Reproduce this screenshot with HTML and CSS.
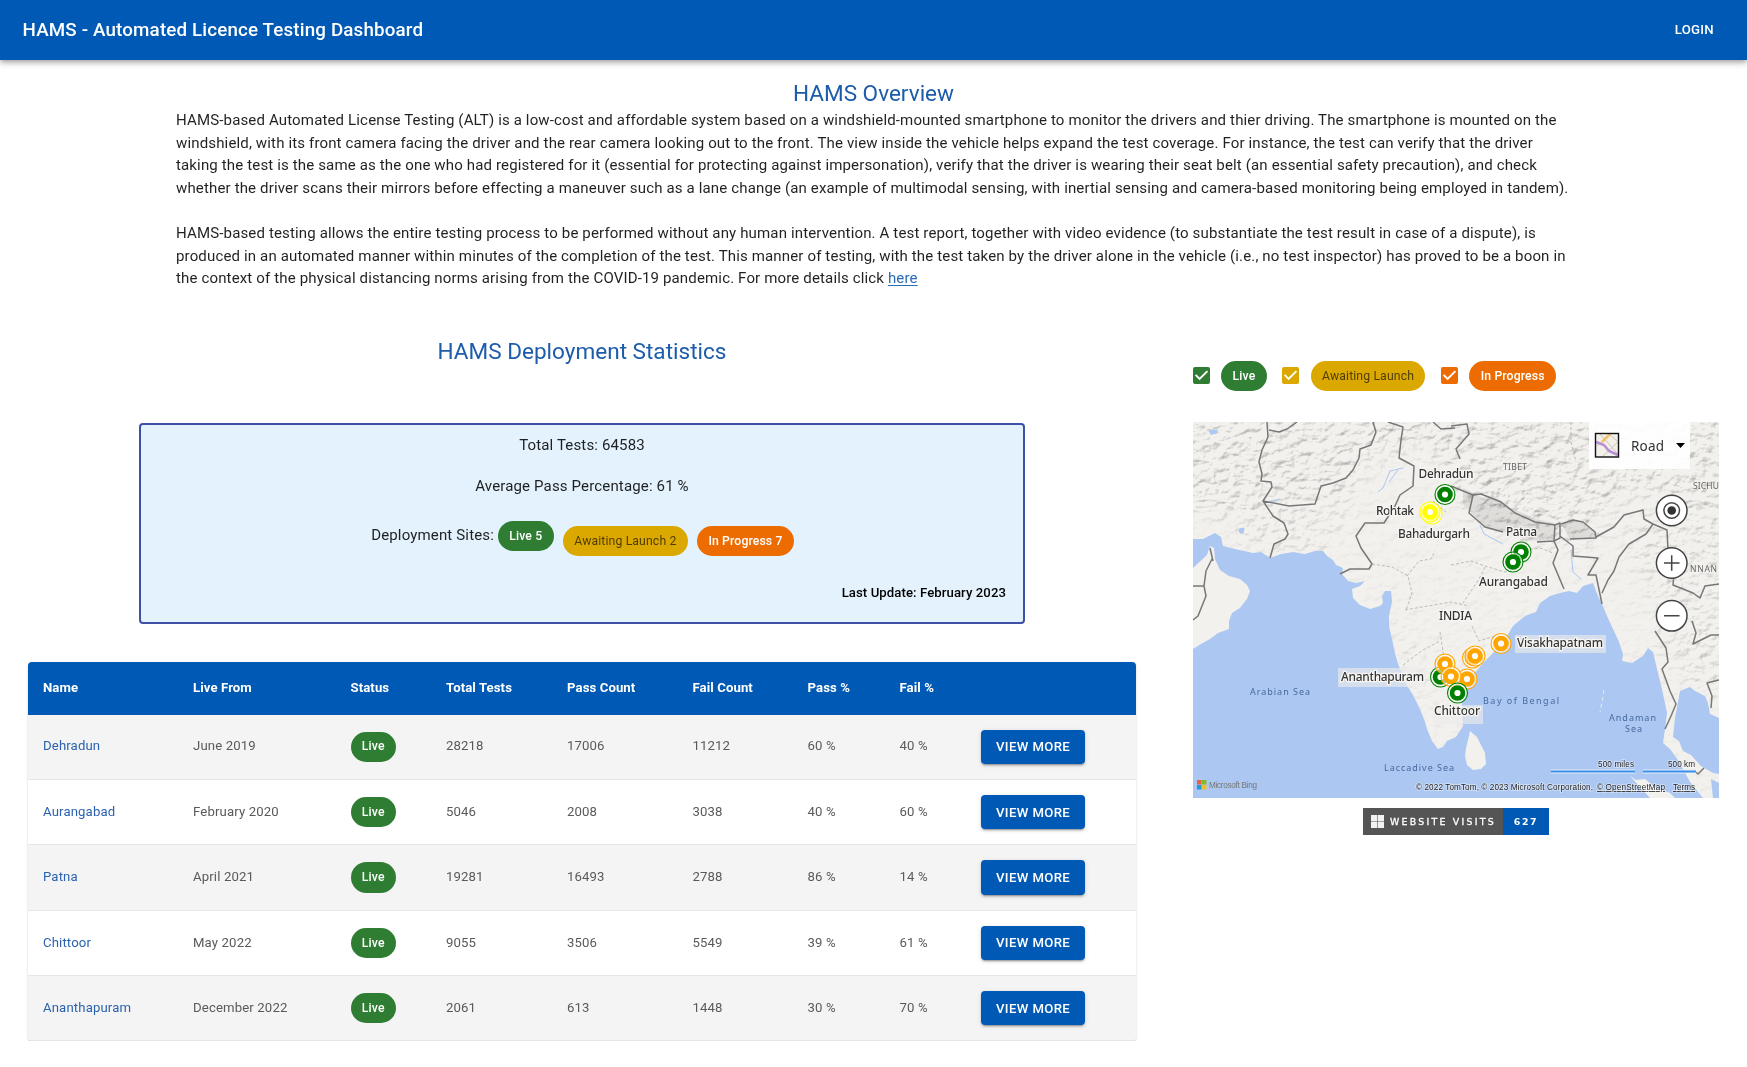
FILE: index.html
```html
<!DOCTYPE html>
<html lang="en">
<head>
<meta charset="utf-8">
<title>HAMS - Automated Licence Testing Dashboard</title>
<link rel="stylesheet" href="styles.css">
</head>
<body>
<header class="appbar"><h1 class="appbar-title">HAMS - Automated Licence Testing Dashboard</h1><a class="login">LOGIN</a></header>
<main>
<section class="overview">
<h2 class="heading">HAMS Overview</h2>
<p>HAMS-based Automated License Testing (ALT) is a low-cost and affordable system based on a windshield-mounted smartphone to monitor the drivers and thier driving. The smartphone is mounted on the<br>windshield, with its front camera facing the driver and the rear camera looking out to the front. The view inside the vehicle helps expand the test coverage. For instance, the test can verify that the driver<br>taking the test is the same as the one who had registered for it (essential for protecting against impersonation), verify that the driver is wearing their seat belt (an essential safety precaution), and check<br>whether the driver scans their mirrors before effecting a maneuver such as a lane change (an example of multimodal sensing, with inertial sensing and camera-based monitoring being employed in tandem).</p>
<p>HAMS-based testing allows the entire testing process to be performed without any human intervention. A test report, together with video evidence (to substantiate the test result in case of a dispute), is<br>produced in an automated manner within minutes of the completion of the test. This manner of testing, with the test taken by the driver alone in the vehicle (i.e., no test inspector) has proved to be a boon in<br>the context of the physical distancing norms arising from the COVID-19 pandemic. For more details click <a class="link">here</a></p>
</section>
<div class="columns">
<section class="stats">
<h2 class="heading">HAMS Deployment Statistics</h2>
<div class="summary">
<p>Total Tests: 64583</p>
<p>Average Pass Percentage: 61 %</p>
<div class="sites"><span class="sites-label">Deployment Sites:</span><span class="chip live">Live 5</span><span class="chip awaiting low">Awaiting Launch 2</span><span class="chip progress low">In Progress 7</span></div>
<p class="updated">Last Update: February 2023</p>
</div>
<table class="table">
<colgroup><col class="c1"><col class="c2"><col class="c3"><col class="c4"><col class="c5"><col class="c6"><col class="c7"><col class="c8"><col></colgroup>
<thead><tr><th>Name</th><th>Live From</th><th>Status</th><th>Total Tests</th><th>Pass Count</th><th>Fail Count</th><th>Pass %</th><th>Fail %</th><th></th></tr></thead>
<tbody>
<tr><td><a>Dehradun</a></td><td>June 2019</td><td><span class="chip live">Live</span></td><td>28218</td><td>17006</td><td>11212</td><td>60 %</td><td>40 %</td><td><button class="more">VIEW MORE</button></td></tr>
<tr><td><a>Aurangabad</a></td><td>February 2020</td><td><span class="chip live">Live</span></td><td>5046</td><td>2008</td><td>3038</td><td>40 %</td><td>60 %</td><td><button class="more">VIEW MORE</button></td></tr>
<tr><td><a>Patna</a></td><td>April 2021</td><td><span class="chip live">Live</span></td><td>19281</td><td>16493</td><td>2788</td><td>86 %</td><td>14 %</td><td><button class="more">VIEW MORE</button></td></tr>
<tr><td><a>Chittoor</a></td><td>May 2022</td><td><span class="chip live">Live</span></td><td>9055</td><td>3506</td><td>5549</td><td>39 %</td><td>61 %</td><td><button class="more">VIEW MORE</button></td></tr>
<tr><td><a>Ananthapuram</a></td><td>December 2022</td><td><span class="chip live">Live</span></td><td>2061</td><td>613</td><td>1448</td><td>30 %</td><td>70 %</td><td><button class="more">VIEW MORE</button></td></tr>
</tbody>
</table>
</section>
<aside class="side">
<div class="legend">
<svg class="check green" viewBox="3 3 18 18"><path d="M19 3H5a2 2 0 0 0-2 2v14a2 2 0 0 0 2 2h14a2 2 0 0 0 2-2V5a2 2 0 0 0-2-2zm-9 14-5-5 1.41-1.41L10 14.17l7.59-7.59L19 8l-9 9z"/></svg><span class="chip live">Live</span>
<svg class="check yellow" viewBox="3 3 18 18"><path d="M19 3H5a2 2 0 0 0-2 2v14a2 2 0 0 0 2 2h14a2 2 0 0 0 2-2V5a2 2 0 0 0-2-2zm-9 14-5-5 1.41-1.41L10 14.17l7.59-7.59L19 8l-9 9z"/></svg><span class="chip awaiting">Awaiting Launch</span>
<svg class="check orange" viewBox="3 3 18 18"><path d="M19 3H5a2 2 0 0 0-2 2v14a2 2 0 0 0 2 2h14a2 2 0 0 0 2-2V5a2 2 0 0 0-2-2zm-9 14-5-5 1.41-1.41L10 14.17l7.59-7.59L19 8l-9 9z"/></svg><span class="chip progress">In Progress</span>
</div>
<svg class="map" viewBox="0 0 526 376" width="526" height="376">
<defs>
<filter id="relief" x="0" y="0" width="100%" height="100%" color-interpolation-filters="sRGB"><feTurbulence type="fractalNoise" baseFrequency=".09 .12" numOctaves="4" seed="8"/><feColorMatrix values="0 0 0 0 0  0 0 0 0 0  0 0 0 0 0  1 0 0 0 0"/><feDiffuseLighting surfaceScale="2" diffuseConstant="1.17" lighting-color="#fff"><feDistantLight azimuth="235" elevation="60"/></feDiffuseLighting></filter>
<filter id="soft"><feGaussianBlur stdDeviation="9"/></filter>
<mask id="hills"><rect width="526" height="376" fill="#1c1c1c"/><g filter="url(#soft)" fill="#aaa"><path d="M-20-20H546V120L500 110 450 60 400 105H340L270 80 230 20 175 45 130 75 80 80 40 95-20 90z"/><path fill="#777" d="M80 75 125 85 160 50 170 80 145 100 130 128H70L35 115z"/><path fill="#777" d="M440 90H540V270H500L470 220 450 150 430 120z"/><path fill="#fff" d="M270 60 300 72 345 102H400V120H345L285 97z"/><path fill="#555" d="M200 190 215 255 240 320 232 270 212 190z"/></g></mask>
<g id="pin"><circle r="10" fill="#fff" fill-opacity=".6" stroke="currentColor" stroke-width="1.1"/><circle r="7.8" fill="currentColor"/><circle r="3.1" fill="#fff"/></g>
</defs>
<rect width="526" height="376" fill="#f2f1ee"/>
<rect width="526" height="376" filter="url(#relief)" mask="url(#hills)" class="relief"/>
<path class="ridge" d="M270 66 290 76 300 73 318 86 343 97 362 101 361 118 344 119 310 110 292 105 270 82zM368 102 380 98 390 100 402 110 403 116 377 117z"/>
<g class="sea">
<path d="M0 117 10 117 22 111 28 115 30 124 42 127 60 131 68 130 77 136 88 132 100 130 112 132 122 129 130 129 134 134 140 138 143 143 150 146 149 152 155 159 163 161 172 159 167 164 159 167 160 176 167 183 177 187 187 184 190 181 189 174 192 169 198 169 199 180 196 194 196 204 199 217 202 231 205 242 209 251 213 262 220 273 227 287 232 300 234 307 239 319 245 327 250 325 254 319 263 315 270 304 269 290 269 281 275 267 277 257 290 241 300 231 314 214 320 204 332 194 343 190 347 181 357 174 367 171 376 169 384 171 390 164 400 161 405 174 409 182 414 194 420 207 426 220 430 232 429 239 439 241 450 234 455 226 460 230 464 247 469 267 474 291 472 307 470 321 477 327 485 338 490 347 497 360 510 376H0z"/>
<path d="M487 269 497 265 502 269 512 274 515 281 517 292 526 296V352L520 351 508 344 498 333 490 329 486 319 480 315 482 296z"/>
<path d="M526 361 518 357 520 376H526z"/>
</g>
<g class="land"><path d="M0 146 14 133 17 124 21 126 22 137 27 148 36 154 47 157 54 163 57 169 54 177 47 186 39 191 36 199 36 207 25 211 17 217 8 222 0 227z"/><path d="M277 309 284 315 288 323 292 331 293 342 288 347 280 348 274 343 272 334 273 326 275 318z"/><path d="M437 354 443 358 452 357 463 366 477 371 482 376H457z"/></g>
<g class="lakes"><path d="M16 9 24 8 23 11 18 12zM46 107 51 106 50 111 47 111z"/><path fill="none" d="M210 46 197 49 190 66 185 70M205 48 196 60M73 80 80 79 87 77M287 103 291 112 310 122M378 128 380 150 388 157"/></g>
<g class="borders"><path d="M74 0 75 15 69 28 66 40 69 52 68 59 78 60 79 65 70 79 96 84 122 82 128 64 140 61 153 56 160 48 166 36 167 27 178 23 183 10 180 0M70 79 80 94 91 101 95 112 92 117 81 122 77 136M76 8 86 10 94 7 104 0M195 0 210 5 208 18 206 36 221 44 220 64 207 73 202 84 191 101 172 101 163 114 168 126 179 142 176 147 157 147 147 152M240 0 248 7 262 6M0 164 11 164 13 149 19 137M11 164 13 174 5 194 0 198M17 126 20 139"/>
<path d="M258 4 274 2 276 12 263 27 267 37M258 64 280 73 276 91 292 105 310 110M280 73 288 72 308 80 322 91 342 100 362 103 361 119 344 120M362 103 367 101 367 116 361 119 365 128 360 141 371 167M367 114 380 124 380 134 405 136 395 153 403 153 409 182M368 102 380 98 390 100 402 110 403 116 377 117M403 115 421 105 431 93 450 88 451 97 460 102 453 112 436 122 426 135 421 149 415 158 409 171M460 102 474 108 475 128M481 151 480 163 500 171 507 176 512 164 526 162M462 209 473 226 475 240 469 247 477 269 483 282 478 294 472 307M499 199 503 211 500 222 518 213 526 213M526 258 514 261 519 274 518 286M500 348 505 352 511 346"/>
</g>
<path class="states" d="M179 142 199 145 215 154 219 171 213 188M214 154 226 139 238 137 242 129M212 188 258 180 276 184M210 243 230 228 247 219M247 210 251 236M258 143 278 139 292 144 312 150 327 147M292 145 286 157 270 181M327 129 347 126 360 131M279 204 286 219 302 214M240 79 253 90M378 0 378 20 383 40"/>
<path d="M411 268 409 280 407 290" fill="none" stroke="#e6ecf3" stroke-dasharray="4 3"/>
<g class="highlight"><rect x="145" y="246" width="88" height="19"/><rect x="322" y="213" width="91" height="18"/><rect x="240" y="283" width="50" height="19"/></g>
<g class="minor"><text x="310" y="48" textLength="24">TIBET</text><text x="500" y="67" textLength="26">SICHU</text><text x="497" y="150" textLength="27">NNAN</text></g>
<g class="water"><text x="57" y="273" textLength="60">Arabian Sea</text><text x="191" y="349" textLength="70">Laccadive Sea</text><text x="290" y="282" textLength="76">Bay of Bengal</text><text x="416" y="299" textLength="47">Andaman</text><text x="432" y="310" textLength="17">Sea</text></g>
<use href="#pin" x="239" y="92" color="#ff0"/><use href="#pin" x="237" y="90" color="#ff0"/>
<g color="#008000"><use href="#pin" x="252" y="72.5"/><use href="#pin" x="328" y="130"/><use href="#pin" x="320" y="140"/><use href="#pin" x="247.5" y="255"/></g>
<g color="#ffa500"><use href="#pin" x="308" y="221.5"/><use href="#pin" x="279.500" y="236"/><use href="#pin" x="282" y="234"/><use href="#pin" x="252" y="242"/><use href="#pin" x="274" y="257"/><use href="#pin" x="258" y="254.500"/></g>
<use href="#pin" x="264.5" y="271" color="#008000"/>
<g class="places"><text x="225.500" y="56" textLength="55">Dehradun</text><text x="183" y="93" textLength="38">Rohtak</text><text x="205" y="116" textLength="72">Bahadurgarh</text><text x="313" y="114" textLength="31">Patna</text><text x="286" y="164" textLength="69">Aurangabad</text><text x="246" y="198" textLength="33">INDIA</text><text x="148" y="259" textLength="83">Ananthapuram</text><text x="324" y="225" textLength="86">Visakhapatnam</text><text x="241" y="293" textLength="46">Chittoor</text></g>
<rect x="396" width="101" height="47" fill="#fff" fill-opacity=".92"/>
<g><rect x="402.500" y="11.500" width="23" height="23.500" fill="#f3efe9"/><path d="M404 24 417 13M410 34 425 20M407 12 424 31M416 12 424 19" stroke="#cbc7b5" fill="none"/><path d="M409 20 417 12" stroke="#f5c069" stroke-width="2.500"/><path d="M403 20 411 23 416 29 425 33" stroke="#b78fd6" stroke-width="2.500" fill="none"/><rect x="402.500" y="11.500" width="23" height="23.500" fill="none" stroke="#111" stroke-width="1.400"/></g>
<text class="road" x="438" y="29" textLength="33">Road</text><path d="M483 21h9l-4.500 5z"/>
<g class="controls"><circle cx="478.700" cy="88.500" r="15.300"/><circle cx="478.700" cy="141" r="15.300"/><circle cx="478.700" cy="193.800" r="15.300"/><circle cx="478.700" cy="88.500" r="7.800"/><circle class="dot" cx="478.700" cy="88.500" r="4.300"/><path d="M471 141h15.500M478.700 133.300v15.500M471 193.800h15.500"/></g>
<g class="scale"><path d="M358 349.500H442M450 349.500H503" stroke="#e6f0fb" stroke-width="4"/><path d="M358 349.500H442M450 349.500H503" stroke="#3b8ee8" stroke-width="2"/></g>
<g class="tiny"><text x="405" y="345" textLength="36">500 miles</text><text x="475" y="345" textLength="27">500 km</text><text x="223" y="368" textLength="177">© 2022 TomTom, © 2023 Microsoft Corporation,</text><text x="404" y="368" textLength="68" class="u">© OpenStreetMap</text><text x="480" y="368" textLength="22" class="u">Terms</text><text x="16" y="366" textLength="48" class="bing">Microsoft Bing</text></g>
<path fill="#e8603c" d="M4 358h4.500v4.500H4z"/><path fill="#7fba2c" d="M9 358h4.500v4.500H9z"/><path fill="#1c9ce0" d="M4 363h4.500v4.500H4z"/><path fill="#f5bd2c" d="M9 363h4.500v4.500H9z"/>
</svg>
<div class="counter"><span class="counter-label"><svg width="13" height="13" viewBox="0 0 13 13"><path fill="#f2f2f2" d="M0 0h6.200v6.200H0zM6.800 0H13v6.200H6.800zM0 6.800h6.200V13H0zM6.800 6.800H13V13H6.800z"/></svg><span class="counter-text">WEBSITE VISITS</span></span><span class="counter-value">627</span></div>
</aside>
</div>
</main>
</body>
</html>
```
FILE: styles.css
```css
* { box-sizing: border-box; }
body { margin: 0; background: #fff; color: rgba(0,0,0,.87); font: 15.04px/22.6px Roboto, sans-serif; letter-spacing: .137px; }
h1, h2, p { margin: 0; }
.appbar { display: flex; align-items: center; justify-content: space-between; height: 60px; padding: 0 33px 0 22.5px; background: #0059b5; color: #fff; box-shadow: 0 2px 4px -1px rgba(0,0,0,.2), 0 4px 5px rgba(0,0,0,.14), 0 1px 9px rgba(0,0,0,.12); }
.appbar-title { font-size: 18.8px; font-weight: 500; letter-spacing: .15px; padding-top: 1px; }
.login { font-size: 13.2px; font-weight: 500; letter-spacing: .3px; }
.heading { font-size: 22.56px; font-weight: 400; line-height: 30px; letter-spacing: 0; color: #1c5cab; text-align: center; }
.overview { padding: 19px 176px 0; white-space: nowrap; }
.overview p { margin-bottom: 22.6px; }
.link { color: #2a6cb8; text-decoration: underline; text-underline-offset: 2px; }
.columns { display: flex; align-items: flex-start; padding: 24.6px 28px 0; }
.stats { width: 1108px; }
.summary { width: 886px; height: 201px; margin: 56.2px auto 0; border: 2px solid #3f51a5; border-radius: 4px; background: #e3f2fd; padding: 8.5px 17px; text-align: center; }
.summary p { margin-bottom: 18.8px; }
.sites { display: flex; justify-content: center; align-items: flex-start; height: 36px; margin: 23.4px 0 0 1px; }
.sites-label { padding-top: 3px; margin-right: 4px; }
.chip { display: inline-flex; align-items: center; height: 30.2px; padding: 0 11.3px; border-radius: 16px; font-size: 12.22px; font-weight: 500; letter-spacing: .13px; color: #fff; white-space: nowrap; }
.low { margin: 5px 0 0 9.4px; }
.live { background: #2e7d32; }
.awaiting { background: #dba800; color: rgba(0,0,0,.65); font-weight: 400; }
.progress { background: #ed6c02; }
.summary .updated { margin: 25px 0 0; text-align: right; font-size: 13.16px; font-weight: 500; color: #000; letter-spacing: .08px; }
.table { width: 1108px; margin-top: 37.4px; table-layout: fixed; border-collapse: separate; border-spacing: 0; border-radius: 4px; overflow: hidden; font-size: 13.16px; box-shadow: 0 2px 1px -1px rgba(0,0,0,.2), 0 1px 1px rgba(0,0,0,.14), 0 1px 3px rgba(0,0,0,.12); }
.c1 { width: 150px; } .c2 { width: 157.500px; } .c3 { width: 95.500px; } .c4 { width: 121px; } .c5 { width: 125.500px; } .c6 { width: 115px; } .c7 { width: 92px; } .c8 { width: 81.500px; }
th, td { padding: 0 15px; text-align: left; white-space: nowrap; }
th { height: 53px; background: #0059b5; color: #fff; font-weight: 700; letter-spacing: .09px; }
td { height: 65.4px; border-bottom: 1px solid #e6e6e6; color: #5a5a5a; }
td a { color: #2b62ae; }
tbody tr:nth-child(odd) { background: #f4f4f4; }
td .chip, .more { display: flex; width: max-content; }
.more { align-items: center; height: 34.3px; padding: 0 15px; border: 0; border-radius: 4px; background: #0059b5; color: #fff; font: 500 13.16px/1 Roboto, sans-serif; letter-spacing: .376px; box-shadow: 0 3px 1px -2px rgba(0,0,0,.2), 0 2px 2px rgba(0,0,0,.14), 0 1px 5px rgba(0,0,0,.12); }
.side { width: 526px; margin: 24px 0 0 57px; }
.legend { display: flex; align-items: center; height: 30px; }
.legend .chip { margin: 0 15.8px 0 11.3px; }
.check { width: 17px; height: 17px; flex: none; }
.green { fill: #2e7d32; } .yellow { fill: #dba800; } .orange { fill: #ed6c02; }
.map { display: block; margin-top: 31px; overflow: hidden; font-family: "Noto Sans", sans-serif; letter-spacing: 0; }
.relief { mix-blend-mode: multiply; }
.ridge { fill: #777; fill-opacity: .16; }
.sea { fill: #abc7f2; }
.land { fill: #f2f1ee; }
.lakes { fill: #abc7f2; stroke: #abc7f2; }
.borders { fill: none; stroke: #777; stroke-width: 1.5; stroke-linejoin: round; }
.states { fill: none; stroke: #bbb; stroke-dasharray: 3 2; }
.highlight { fill: #ebebea; fill-opacity: .65; }
.places { font-size: 12px; font-weight: 500; fill: #333; stroke: #f6f5f2; stroke-width: 2.5; paint-order: stroke; }
.minor { font-size: 8.5px; fill: #666; }
.water { font-size: 9px; fill: #49699c; }
.road { font: 13.500px "Noto Sans", sans-serif; fill: #333; }
.controls { fill: #fff; stroke: #444; stroke-width: 1.5; }
.controls .dot { fill: #333; stroke: none; }
.tiny { font: 8.200px "Liberation Sans", sans-serif; fill: #222; stroke: rgba(255,255,255,.5); stroke-width: 1.5; paint-order: stroke; }
.tiny .u { text-decoration: underline; }
.tiny .bing { fill: #777; stroke: none; }
.counter { display: flex; width: 186px; height: 27px; margin: 10px 0 0 170px; color: #fff; font: 9.4px/27px "DejaVu Sans", sans-serif; }
.counter-label { display: flex; align-items: center; gap: 6px; width: 140px; padding-left: 8px; background: #555; letter-spacing: 2.25px; -webkit-text-stroke: .3px #fff; }
.counter-value { flex: 1; background: #0059b5; text-align: center; font-weight: 700; letter-spacing: 1.6px; }
```
